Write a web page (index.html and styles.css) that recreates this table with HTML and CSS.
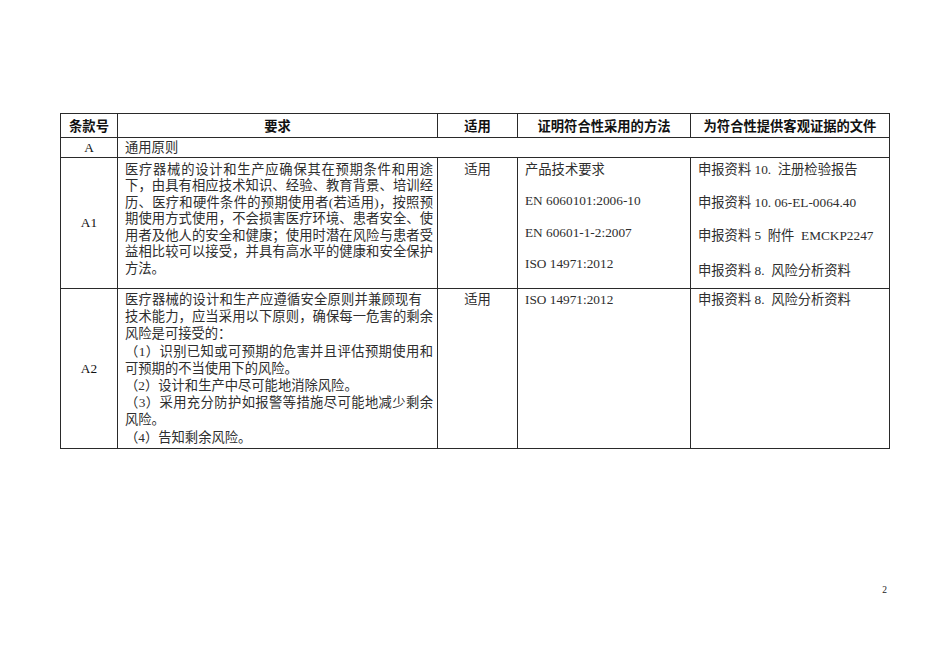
FILE: index.html
```html
<!DOCTYPE html>
<html lang="zh-CN">
<head>
<meta charset="utf-8">
<title>条款表</title>
<link rel="stylesheet" href="styles.css">
</head>
<body>
<div class="page">
  <table class="grid">
    <colgroup>
      <col class="c1"><col class="c2"><col class="c3"><col class="c4"><col class="c5">
    </colgroup>
    <thead>
      <tr class="r-head">
        <th>条款号</th>
        <th>要求</th>
        <th>适用</th>
        <th>证明符合性采用的方法</th>
        <th>为符合性提供客观证据的文件</th>
      </tr>
    </thead>
    <tbody>
      <tr class="r-a">
        <td class="code">A</td>
        <td class="span" colspan="4">通用原则</td>
      </tr>
      <tr class="r-a1">
        <td class="code">A1</td>
        <td class="req">
          <div class="ln">医疗器械的设计和生产应确保其在预期条件和用途</div>
          <div class="ln">下，由具有相应技术知识、经验、教育背景、培训经</div>
          <div class="ln">历、医疗和硬件条件的预期使用者(若适用)，按照预</div>
          <div class="ln">期使用方式使用，不会损害医疗环境、患者安全、使</div>
          <div class="ln">用者及他人的安全和健康；使用时潜在风险与患者受</div>
          <div class="ln">益相比较可以接受，并具有高水平的健康和安全保护</div>
          <div class="ln end">方法。</div>
        </td>
        <td class="apply">适用</td>
        <td class="method">
          <p>产品技术要求</p>
          <p>EN 6060101:2006-10</p>
          <p>EN 60601-1-2:2007</p>
          <p>ISO 14971:2012</p>
        </td>
        <td class="docs">
          <p>申报资料 10.&nbsp; 注册检验报告</p>
          <p>申报资料 10. 06-EL-0064.40</p>
          <p class="gap">申报资料 5&nbsp; 附件&nbsp; EMCKP2247</p>
          <p>申报资料 8.&nbsp; 风险分析资料</p>
        </td>
      </tr>
      <tr class="r-a2">
        <td class="code">A2</td>
        <td class="req">
          <div class="ln end first">医疗器械的设计和生产应遵循安全原则并兼顾现有</div>
          <div class="ln">技术能力，应当采用以下原则，确保每一危害的剩余</div>
          <div class="ln end">风险是可接受的：</div>
          <div class="ln">（1）识别已知或可预期的危害并且评估预期使用和</div>
          <div class="ln end">可预期的不当使用下的风险。</div>
          <div class="ln end">（2）设计和生产中尽可能地消除风险。</div>
          <div class="ln">（3）采用充分防护如报警等措施尽可能地减少剩余</div>
          <div class="ln end">风险。</div>
          <div class="ln end">（4）告知剩余风险。</div>
        </td>
        <td class="apply">适用</td>
        <td class="method">
          <p>ISO 14971:2012</p>
        </td>
        <td class="docs">
          <p>申报资料 8.&nbsp; 风险分析资料</p>
        </td>
      </tr>
    </tbody>
  </table>
  <div class="pagenum">2</div>
</div>
</body>
</html>
```

FILE: styles.css
```css
html, body {
  margin: 0;
  padding: 0;
  background: #ffffff;
}

body {
  width: 950px;
  height: 672px;
  overflow: hidden;
  font-family: "Liberation Serif", "Noto Sans CJK SC", serif;
  font-size: 13.3px;
  color: #2e2e2e;
}

.page {
  padding: 113px 0 0 60px;
}

.grid {
  border-collapse: collapse;
  table-layout: fixed;
  width: 829px;
}

.c1 { width: 57px; }
.c2 { width: 320px; }
.c3 { width: 80px; }
.c4 { width: 173px; }
.c5 { width: 199px; }

.grid th,
.grid td {
  border: 1px solid #2a2a2a;
  padding: 0;
}

.grid th {
  font-family: "Noto Sans CJK SC", sans-serif;
  font-weight: bold;
  font-size: 13.3px;
  text-align: center;
  vertical-align: middle;
  color: #111;
  line-height: 16px;
}

.r-head { height: 24px; }
.r-a { height: 20px; }
.r-a1 { height: 131px; }
.r-a2 { height: 160px; }

.r-a td {
  vertical-align: middle;
  line-height: 16px;
}

.code {
  text-align: center;
  vertical-align: middle;
  color: #111;
}

.span {
  padding-left: 7px !important;
}

.req {
  vertical-align: top;
  padding: 3.5px 4px 0 7px !important;
}

.r-a1 .ln {
  line-height: 16.5px;
}

.r-a2 .req {
  padding-top: 2px !important;
}

.r-a2 .ln {
  line-height: 17.2px;
}

.ln {
  text-align: justify;
  text-align-last: justify;
  white-space: nowrap;
}

.ln.end {
  text-align: left;
  text-align-last: left;
}

.ln.first {
  letter-spacing: 0.2px;
}

.apply {
  text-align: center;
  vertical-align: top;
  padding-top: 3.5px !important;
  line-height: 16.5px;
}

.r-a2 .apply,
.r-a2 .method,
.r-a2 .docs {
  padding-top: 2px !important;
  line-height: 17.2px;
}

.method,
.docs {
  vertical-align: top;
  padding: 3.5px 4px 0 7px !important;
  line-height: 16.5px;
}

.method p,
.docs p {
  margin: 0;
  white-space: nowrap;
}

.method p + p {
  margin-top: 15px;
}

.docs p + p {
  margin-top: 16.5px;
}

.docs p.gap + p {
  margin-top: 18.5px;
}

.pagenum {
  margin-top: 136px;
  width: 827px;
  text-align: right;
  font-size: 9.5px;
  color: #222;
}
```
